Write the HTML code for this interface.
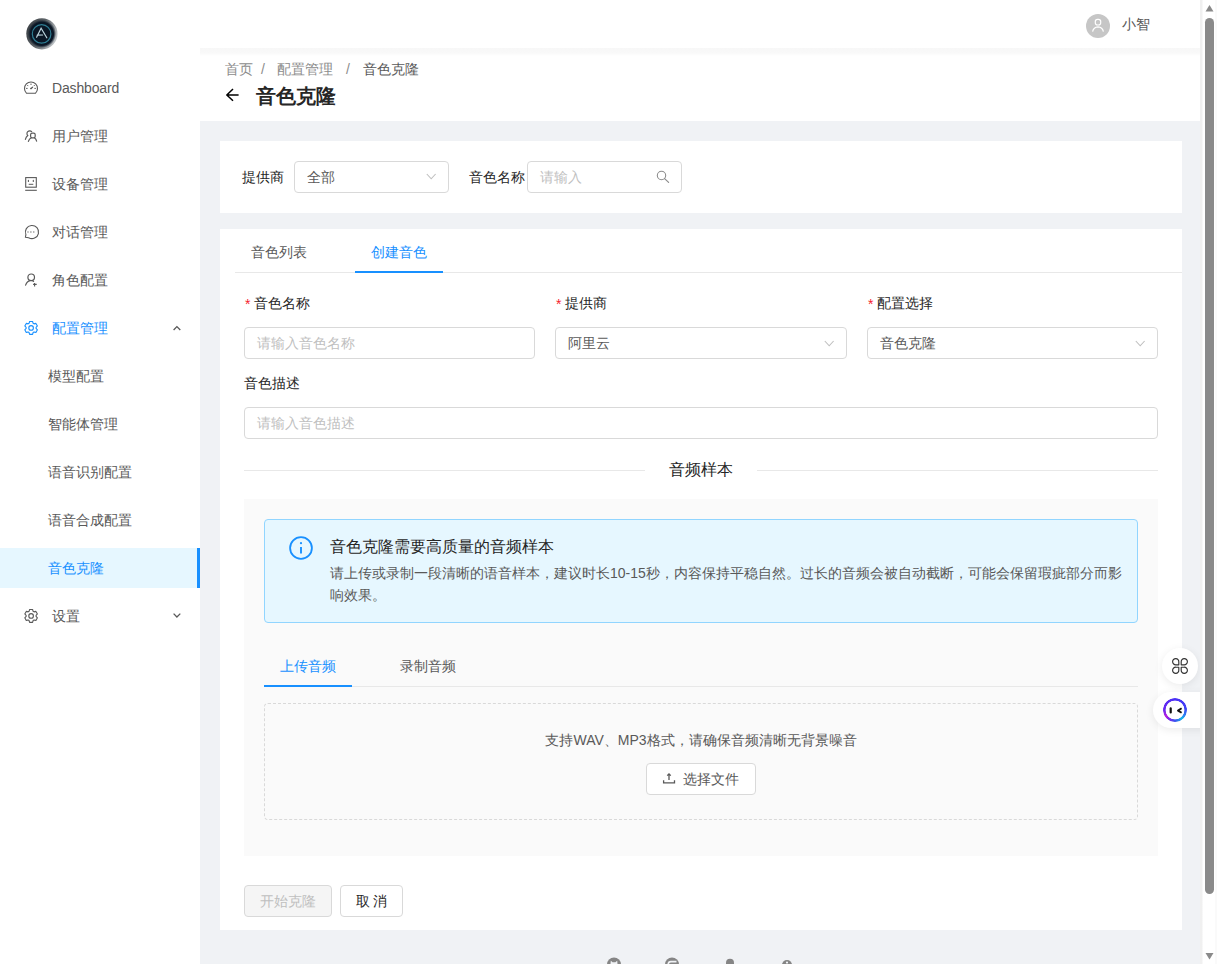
<!DOCTYPE html>
<html><head><meta charset="utf-8">
<style>
*{box-sizing:border-box;margin:0;padding:0}
html,body{width:1217px;height:964px;overflow:hidden;background:#f0f2f5;font-family:"Liberation Sans",sans-serif;font-size:14px;color:#595959}
.a{position:absolute}
svg{position:absolute;overflow:visible}
#side{position:absolute;left:0;top:0;width:200px;height:964px;background:#fff;z-index:2}
.mi{position:absolute;left:0;width:200px;height:40px;line-height:40px;color:#595959;white-space:nowrap}
.mi svg{left:20px;top:10px;width:22px;height:20px}
.mi .tx{position:absolute;left:52px;top:0}
.mi.sub .tx{left:48px}
.mi.act{background:#e6f7ff;color:#1890ff}
.mi.act:after{content:"";position:absolute;right:0;top:0;width:3px;height:40px;background:#1890ff}
#hdr{position:absolute;left:200px;top:0;width:1001px;height:48px;background:#fff;z-index:1}
#ph{position:absolute;left:200px;top:49px;width:1000px;height:72px;background:#fff}
.card{position:absolute;background:#fff}
.inp{position:absolute;height:32px;border:1px solid #d9d9d9;border-radius:4px;background:#fff;line-height:30px;padding-left:12px;color:#595959}
.ph{color:#bfbfbf}
.lbl{position:absolute;color:#262626;white-space:nowrap}
.req{color:#f5222d;margin-right:5px;position:relative;left:1px;top:1px;display:inline-block}
.btn{position:absolute;height:32px;border:1px solid #d9d9d9;border-radius:4px;background:#fff;line-height:30px;text-align:center;color:#595959}
#sb{position:absolute;left:1200px;top:0;width:17px;height:964px;background:linear-gradient(90deg,#f0f0f0 0,#f0f0f0 2px,#fff 3px,#fff 15px,#fafafa 15px);z-index:5}
</style></head><body>

<!-- sidebar -->
<div id="side">
  <svg style="left:22px;top:14px;width:40px;height:40px" viewBox="22 14 40 40">
    <defs>
      <linearGradient id="lg1" x1="0" y1="0.3" x2="1" y2="0.7">
        <stop offset="0" stop-color="#3b4045"/><stop offset="0.45" stop-color="#5d6368"/><stop offset="1" stop-color="#c9ced1"/>
      </linearGradient>
      <radialGradient id="lg2" cx="0.5" cy="0.5" r="0.5">
        <stop offset="0" stop-color="#0a1524"/><stop offset="0.82" stop-color="#0b1726"/><stop offset="1" stop-color="#0b1726" stop-opacity="0"/>
      </radialGradient>
    </defs>
    <circle cx="41.9" cy="33.8" r="15.6" fill="url(#lg1)"/>
    <circle cx="41.9" cy="33.8" r="14.2" fill="url(#lg2)"/>
    <circle cx="41.6" cy="33.9" r="9.3" fill="none" stroke="#2f7d93" stroke-width="1.2"/>
    <path d="M36.6,37.2 L41.1,28.2 L46.8,37.8 M37.2,35.2 L42.6,35.0" fill="none" stroke="#bcd3dc" stroke-width="1.2" stroke-linecap="round"/>
  </svg>

  <div class="mi" style="top:68px">
    <svg viewBox="0 0 22 20"><path d="M6.6,15.3 A6.5,6.5 0 1 1 15.4,15.3 Z" fill="none" stroke="#595959" stroke-width="1.1"/><path d="M11,10.5 L12.6,9.2" stroke="#595959" stroke-width="1.2" stroke-linecap="round"/><circle cx="11" cy="10.5" r=".8" fill="#595959"/><path d="M7.6,7.4 l.4,.4 M14.4,7.4 l-.4,.4 M6.5,10.4 h.7 M15.5,10.4 h-.7 M11,6 v.6" stroke="#595959" stroke-width="1" stroke-linecap="round"/></svg>
    <span class="tx" style="letter-spacing:-0.15px">Dashboard</span></div>
  <div class="mi" style="top:116px">
    <svg viewBox="0 0 22 20"><path d="M11.7,5.6 A2.7,2.7 0 1 0 7.8,9.6 Q6,10.8 5.4,13.4" fill="none" stroke="#595959" stroke-width="1.15" stroke-linecap="round"/><rect x="10.6" y="7.2" width="4.6" height="4.6" rx="1.6" fill="none" stroke="#595959" stroke-width="1.2"/><path d="M8.4,15.4 Q9.2,12.6 11.2,12 M14.6,12 Q16,12.8 16.6,15.2" fill="none" stroke="#595959" stroke-width="1.2" stroke-linecap="round"/></svg>
    <span class="tx">用户管理</span></div>
  <div class="mi" style="top:164px">
    <svg viewBox="0 0 22 20"><rect x="5.7" y="3.6" width="10.6" height="9.6" fill="none" stroke="#595959" stroke-width="1.1"/><path d="M8.4,6.3 v1.2 M13.3,6.3 v1.2" stroke="#595959" stroke-width="1.1" stroke-linecap="round"/><path d="M8.7,10.3 h4.6" stroke="#595959" stroke-width="1"/><path d="M5.2,16.3 h11.6" stroke="#595959" stroke-width="1.1"/></svg>
    <span class="tx">设备管理</span></div>
  <div class="mi" style="top:212px">
    <svg viewBox="0 0 22 20"><path d="M5.4,15.3 L5.9,12.6 A6.6,6.6 0 1 1 8.6,15.7 Z" fill="none" stroke="#595959" stroke-width="1.1" stroke-linejoin="round"/><circle cx="8" cy="10" r=".7" fill="#777"/><circle cx="10.9" cy="10" r=".7" fill="#777"/><circle cx="13.8" cy="10" r=".7" fill="#777"/></svg>
    <span class="tx">对话管理</span></div>
  <div class="mi" style="top:260px">
    <svg viewBox="0 0 22 20"><circle cx="11.2" cy="7.3" r="3.3" fill="none" stroke="#595959" stroke-width="1.2"/><path d="M5.6,15.1 Q7,11 10.2,10.6 M12.2,10.6 Q13.2,11 13.6,11.4" fill="none" stroke="#595959" stroke-width="1.2" stroke-linecap="round"/><path d="M13.1,14.4 h3.6 M14.6,12.9 v3.5" stroke="#595959" stroke-width="1.1"/></svg>
    <span class="tx">角色配置</span></div>
  <div class="mi" style="top:308px;color:#1890ff">
    <svg viewBox="0 0 22 20"><path d="M9.07,5.33 L9.62,3.47 L12.58,3.47 L13.13,5.33 L14.04,5.85 L15.93,5.40 L17.41,7.97 L16.07,9.38 L16.07,10.42 L17.41,11.83 L15.93,14.40 L14.04,13.95 L13.13,14.47 L12.58,16.33 L9.62,16.33 L9.07,14.47 L8.16,13.95 L6.27,14.40 L4.79,11.83 L6.13,10.42 L6.13,9.38 L4.79,7.97 L6.27,5.40 L8.16,5.85 Z" fill="none" stroke="#1890ff" stroke-width="1.1" stroke-linejoin="round"/><circle cx="11.1" cy="9.9" r="2.3" fill="none" stroke="#1890ff" stroke-width="1.1"/></svg>
    <span class="tx">配置管理</span>
    <svg style="left:172px;top:16px;width:10px;height:8px" viewBox="172 324 10 8"><path d="M173.6,330 L176.9,326.6 L180.3,330" fill="none" stroke="#595959" stroke-width="1.3"/></svg>
  </div>
  <div class="mi sub" style="top:356px"><span class="tx">模型配置</span></div>
  <div class="mi sub" style="top:404px"><span class="tx">智能体管理</span></div>
  <div class="mi sub" style="top:452px"><span class="tx">语音识别配置</span></div>
  <div class="mi sub" style="top:500px"><span class="tx">语音合成配置</span></div>
  <div class="mi sub act" style="top:548px"><span class="tx">音色克隆</span></div>
  <div class="mi" style="top:596px">
    <svg viewBox="0 0 22 20"><path d="M9.07,5.33 L9.62,3.47 L12.58,3.47 L13.13,5.33 L14.04,5.85 L15.93,5.40 L17.41,7.97 L16.07,9.38 L16.07,10.42 L17.41,11.83 L15.93,14.40 L14.04,13.95 L13.13,14.47 L12.58,16.33 L9.62,16.33 L9.07,14.47 L8.16,13.95 L6.27,14.40 L4.79,11.83 L6.13,10.42 L6.13,9.38 L4.79,7.97 L6.27,5.40 L8.16,5.85 Z" fill="none" stroke="#595959" stroke-width="1.1" stroke-linejoin="round"/><circle cx="11.1" cy="9.9" r="2.3" fill="none" stroke="#595959" stroke-width="1.1"/></svg>
    <span class="tx">设置</span>
    <svg style="left:172px;top:14px;width:10px;height:8px" viewBox="172 610 10 8"><path d="M173.6,613.6 L176.9,617 L180.3,613.6" fill="none" stroke="#595959" stroke-width="1.3"/></svg>
  </div>
</div>

<!-- header -->
<div id="hdr">
  <svg style="left:886px;top:14px;width:24px;height:24px" viewBox="1086 14 24 24"><circle cx="1098" cy="26" r="12" fill="#c6c6c6"/><rect x="1095.3" y="19.4" width="5.4" height="5.6" rx="2.2" fill="none" stroke="#fff" stroke-width="1.2"/><path d="M1092.6,31.6 Q1093.5,27 1098,26.8 Q1102.5,27 1103.4,31.6" fill="none" stroke="#fff" stroke-width="1.2"/></svg>
  <div class="a" style="left:922px;top:13px;line-height:22px;color:#595959">小智</div>
</div>
<div id="ph"><div class="a" style="left:0;top:-1px;width:1000px;height:8px;background:linear-gradient(#f7f7f7 0,#f9f9f9 5px,#fff 8px)"></div>
  <div class="a" style="left:25px;top:9px;line-height:22px;color:#8c8c8c">首页</div>
  <div class="a" style="left:61px;top:9px;line-height:22px;color:#8c8c8c">/</div>
  <div class="a" style="left:77px;top:9px;line-height:22px;color:#8c8c8c">配置管理</div>
  <div class="a" style="left:146px;top:9px;line-height:22px;color:#8c8c8c">/</div>
  <div class="a" style="left:163px;top:9px;line-height:22px;color:#595959">音色克隆</div>
  <svg style="left:20px;top:35px;width:24px;height:22px" viewBox="220 84 24 22"><path d="M233,89 L226.8,95 L233,100.8 M227,95 H238.6" fill="none" stroke="#000" stroke-width="1.5" stroke-linejoin="round"/></svg>
  <div class="a" style="left:56px;top:33px;line-height:28px;font-size:20px;font-weight:bold;color:#262626">音色克隆</div>
</div>

<!-- filter card -->
<div class="card" style="left:220px;top:141px;width:962px;height:72px">
  <div class="lbl" style="left:22px;top:25px;line-height:22px">提供商</div>
  <div class="inp" style="left:74px;top:20px;width:155px">全部</div>
  <svg style="left:200px;top:25px;width:24px;height:22px" viewBox="420 166 24 22"><path d="M426.8,174 L431.2,178.8 L435.6,174" fill="none" stroke="#bfbfbf" stroke-width="1.1"/></svg>
  <div class="lbl" style="left:249px;top:25px;line-height:22px">音色名称</div>
  <div class="inp ph" style="left:307px;top:20px;width:155px">请输入</div>
  <svg style="left:430px;top:24px;width:26px;height:24px" viewBox="650 165 26 24"><circle cx="661.5" cy="175.5" r="4.2" fill="none" stroke="#8c8c8c" stroke-width="1.1"/><path d="M664.6,178.6 L668.6,182.4" stroke="#8c8c8c" stroke-width="1.2" stroke-linecap="round"/></svg>
</div>

<!-- main card -->
<div class="card" style="left:220px;top:229px;width:962px;height:701px">
  <div class="a" style="left:15px;top:43px;width:947px;height:1px;background:#e8e8e8"></div>
  <div class="a" style="left:31px;top:12px;line-height:22px;color:#595959">音色列表</div>
  <div class="a" style="left:151px;top:12px;line-height:22px;color:#1890ff">创建音色</div>
  <div class="a" style="left:135px;top:42px;width:88px;height:2px;background:#1890ff"></div>

  <div class="lbl" style="left:24px;top:63px;line-height:22px"><span class="req">*</span>音色名称</div>
  <div class="inp ph" style="left:24px;top:98px;width:291px">请输入音色名称</div>
  <div class="lbl" style="left:335px;top:63px;line-height:22px"><span class="req">*</span>提供商</div>
  <div class="inp" style="left:335px;top:98px;width:292px">阿里云</div>
  <svg style="left:598px;top:104px;width:24px;height:22px" viewBox="818 333 24 22"><path d="M824.8,341 L829.2,345.8 L833.6,341" fill="none" stroke="#bfbfbf" stroke-width="1.1"/></svg>
  <div class="lbl" style="left:647px;top:63px;line-height:22px"><span class="req">*</span>配置选择</div>
  <div class="inp" style="left:647px;top:98px;width:291px">音色克隆</div>
  <svg style="left:909px;top:104px;width:24px;height:22px" viewBox="1129 333 24 22"><path d="M1135.8,341 L1140.2,345.8 L1144.6,341" fill="none" stroke="#bfbfbf" stroke-width="1.1"/></svg>
  <div class="lbl" style="left:24px;top:143px;line-height:22px">音色描述</div>
  <div class="inp ph" style="left:24px;top:178px;width:914px">请输入音色描述</div>

  <div class="a" style="left:24px;top:241px;width:401px;height:1px;background:#e8e8e8"></div>
  <div class="a" style="left:537px;top:241px;width:401px;height:1px;background:#e8e8e8"></div>
  <div class="a" style="left:449px;top:230px;line-height:22px;font-size:16px;color:#262626">音频样本</div>

  <div class="a" style="left:24px;top:270px;width:914px;height:357px;background:#fafafa">
    <!-- alert -->
    <div class="a" style="left:20px;top:20px;width:874px;height:104px;background:#e6f7ff;border:1px solid #91d5ff;border-radius:4px">
      <svg style="left:23px;top:15px;width:26px;height:26px" viewBox="288 535 26 26"><circle cx="301" cy="548" r="10.9" fill="none" stroke="#1890ff" stroke-width="1.8"/><circle cx="301" cy="543.2" r="1.1" fill="#1890ff"/><path d="M301,547 V553.6" stroke="#1890ff" stroke-width="1.9"/></svg>
      <div class="a" style="left:65px;top:15px;line-height:24px;font-size:16px;color:#262626;white-space:nowrap">音色克隆需要高质量的音频样本</div>
      <div class="a" style="left:65px;top:42px;line-height:22px;color:#595959;white-space:nowrap">请上传或录制一段清晰的语音样本，建议时长10-15秒，内容保持平稳自然。过长的音频会被自动截断，可能会保留瑕疵部分而影<br>响效果。</div>
    </div>
    <!-- inner tabs -->
    <div class="a" style="left:20px;top:187px;width:874px;height:1px;background:#e8e8e8"></div>
    <div class="a" style="left:36px;top:156px;line-height:22px;color:#1890ff">上传音频</div>
    <div class="a" style="left:156px;top:156px;line-height:22px;color:#595959">录制音频</div>
    <div class="a" style="left:20px;top:186px;width:88px;height:2px;background:#1890ff"></div>
    <!-- upload box -->
    <div class="a" style="left:20px;top:204px;width:874px;height:117px;border:1px dashed #d9d9d9;border-radius:4px">
      <div class="a" style="left:0;top:25px;width:872px;text-align:center;line-height:22px;color:#595959">支持WAV、MP3格式，请确保音频清晰无背景噪音</div>
      <div class="btn" style="left:381px;top:59px;width:110px;color:#595959">
        <svg style="left:13px;top:6px;width:18px;height:18px" viewBox="660 770 18 18"><path d="M669,774.2 V780 M667.2,775.6 L669,773.8 L670.8,775.6" fill="none" stroke="#595959" stroke-width="1.3"/><path d="M663.6,780.2 V782.8 H674.5 V780.2" fill="none" stroke="#595959" stroke-width="1.3"/></svg>
        <span style="position:absolute;left:36px;top:0">选择文件</span>
      </div>
    </div>
  </div>

  <div class="btn" style="left:24px;top:656px;width:88px;background:#f5f5f5;color:#bfbfbf">开始克隆</div>
  <div class="btn" style="left:120px;top:656px;width:63px;color:#262626">取 消</div>
</div>

<!-- floating buttons -->
<div class="a" style="left:1162px;top:648px;width:36px;height:36px;border-radius:50%;background:#fff;box-shadow:0 2px 8px rgba(0,0,0,.08);z-index:3">
  <svg style="left:0;top:0;width:36px;height:36px" viewBox="1162 648 36 36"><path d="M1178.8,664.8 H1176 A3.1,3.1 0 1 1 1178.8,662 Z M1181.2,664.8 H1184 A3.1,3.1 0 1 0 1181.2,662 Z M1178.8,667.2 H1176 A3.1,3.1 0 1 0 1178.8,670 Z M1181.2,667.2 H1184 A3.1,3.1 0 1 1 1181.2,670 Z" fill="none" stroke="#333" stroke-width="1.15" stroke-linejoin="round"/></svg>
</div>
<div class="a" style="left:1153px;top:692px;width:60px;height:36px;border-radius:18px 0 0 18px;background:#fff;box-shadow:0 2px 8px rgba(0,0,0,.08);z-index:3">
  <div class="a" style="left:10px;top:6px;width:24px;height:24px;border-radius:50%;background:conic-gradient(from 0deg,#4a30f5 0deg,#4040f5 80deg,#2a8af0 125deg,#14b8e8 140deg,#3a50f0 180deg,#8a22e8 220deg,#b81ee0 235deg,#6a28f0 270deg,#4a30f5 360deg);-webkit-mask:radial-gradient(circle,transparent 9.1px,#000 9.7px)"></div><svg style="left:0;top:0;width:60px;height:36px" viewBox="1153 692 60 36">
    <defs><linearGradient id="rg" x1="0" y1="0" x2="1" y2="1"><stop offset="0" stop-color="#5a2cf0"/><stop offset="0.4" stop-color="#4a3af5"/><stop offset="0.7" stop-color="#3d5cf5"/><stop offset="1" stop-color="#12c0e8"/></linearGradient>
    <linearGradient id="rg2" x1="0" y1="0" x2="0" y2="1"><stop offset="0.4" stop-color="#a020f0" stop-opacity="0"/><stop offset="1" stop-color="#b020e0"/></linearGradient></defs>
    
    <path d="M1170.7,708.4 V712.4" stroke="#111" stroke-width="2.2" stroke-linecap="round"/>
    <path d="M1181.6,708.3 L1178,710.6 L1181.6,712.8" fill="none" stroke="#111" stroke-width="1.9" stroke-linejoin="round"/>
  </svg>
</div>

<!-- footer icons (partially visible) -->
<svg style="left:600px;top:950px;width:200px;height:14px" viewBox="600 950 200 14">
  <circle cx="614" cy="964.5" r="7" fill="#858585"/>
  <path d="M610.5,964 L610.8,960.8 L612.6,962.2 H615.4 L617.2,960.8 L617.5,964 Z" fill="#f0f2f5"/>
  <circle cx="672" cy="964.5" r="7" fill="#858585"/>
  <path d="M676.5,961.6 H670.8 A2.8,2.8 0 0 0 668.2,964" fill="none" stroke="#f0f2f5" stroke-width="1.6"/>
  <rect x="726" y="958.7" width="8" height="12" rx="4" fill="#858585"/>
  <circle cx="787" cy="965" r="5.1" fill="#858585"/>
  <circle cx="787" cy="962.6" r="1.1" fill="#f0f2f5"/>
</svg>
<!-- scrollbar -->
<div id="sb">
  <svg style="left:0;top:0;width:17px;height:964px" viewBox="1200 0 17 964"><path d="M1205.5,11.6 L1209.5,5 L1213.5,11.6 Z" fill="#8a8a8a"/><path d="M1205.5,953 L1209.5,959.6 L1213.5,953 Z" fill="#8a8a8a"/></svg>
  <div class="a" style="left:5px;top:18px;width:9px;height:876px;border-radius:4.5px;background:#8a8a8a"></div>
</div>
</body></html>
